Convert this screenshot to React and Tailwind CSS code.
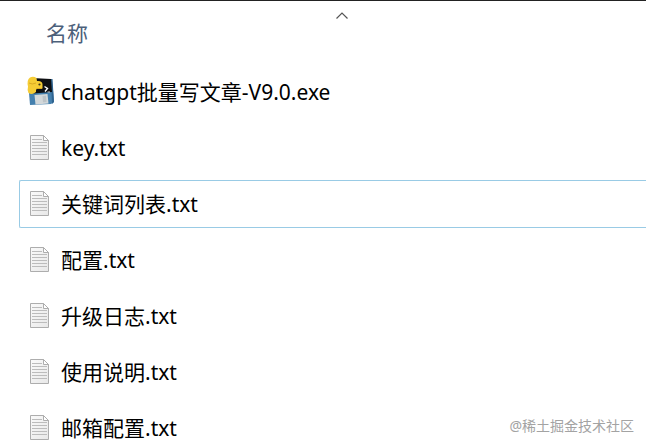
import clsx from "clsx";

const files = [
  { name: "chatgpt批量写文章-V9.0.exe", type: "exe" },
  { name: "key.txt", type: "txt" },
  { name: "关键词列表.txt", type: "txt", selected: true },
  { name: "配置.txt", type: "txt" },
  { name: "升级日志.txt", type: "txt" },
  { name: "使用说明.txt", type: "txt" },
  { name: "邮箱配置.txt", type: "txt" },
];

// Sheet of paper with a folded corner and ruled lines
const TextIcon = () => (
  <svg viewBox="0 0 32 32" className="size-8 shrink-0" aria-hidden="true">
    <defs>
      <linearGradient id="paper" x1="0" y1="0" x2="1" y2="1">
        <stop offset="0" stopColor="#fafafa" />
        <stop offset="1" stopColor="#e8e8e8" />
      </linearGradient>
    </defs>
    <path d="M5.5 3.5H18.5L23.5 8.5V27.5H5.5Z" fill="url(#paper)" stroke="#adadad" />
    <path d="M18.5 3.5V8.5H23.5Z" fill="#fff" stroke="#adadad" strokeLinejoin="round" />
    <path
      d="M7 7.5H17M7 10.5H22M7 13.5H22M7 16.5H22M7 19.5H22M7 22.5H22"
      stroke="#bcbcbc"
      fill="none"
    />
  </svg>
);

// Floppy disk with a console screen and the python snake
const ExeIcon = () => (
  <svg viewBox="0 0 32 32" className="size-8 shrink-0" aria-hidden="true">
    <path d="M3 5L27 3L29 26L26 28L5 29Z" fill="#4580ae" />
    <path d="M26 3L27.5 3L29 26L27 28Z" fill="#2f638f" />
    <path d="M7 2L26 3L27 16L8 17.5Z" fill="#0e0f12" />
    <path d="M9.5 19L22.5 18L23.5 27.5L10.5 28.5Z" fill="#d3d8da" />
    <path d="M17.5 20L21 19.7L21.6 26L18 26.3Z" fill="#bcc3c7" />
    <path d="M19.5 10.5L22.5 12.5L20 15.5" fill="none" stroke="#fff" strokeWidth="1.4" />
    <path d="M22.5 16H25" fill="none" stroke="#c9cdd0" />
    <path
      d="M5 1.5Q8.5 0 11.5 2L12 5Q17.5 4.5 17.5 8.5V12.5H12L11 14V16Q7 19.5 3.5 17Q2 14 3 10.5Q1.5 4 5 1.5Z"
      fill="#f5cc35"
    />
    <path d="M4 7Q7 9 11 7M12 12.5H17" fill="none" stroke="#d9a922" />
    <circle cx="14.5" cy="8.5" r="1.1" fill="#413819" />
  </svg>
);

const FileRow = ({ file }) => (
  <li>
    <button
      type="button"
      aria-pressed={Boolean(file.selected)}
      className={clsx(
        "flex h-12 w-full items-center gap-1 rounded-l-xs border border-r-0 pl-[5px] text-left text-[21px] leading-7 text-black",
        file.selected ? "border-[#99cbe5]" : "border-transparent"
      )}
    >
      {file.type === "exe" ? <ExeIcon /> : <TextIcon />}
      <span className="whitespace-nowrap">{file.name}</span>
    </button>
  </li>
);

const App = () => {
  return (
    <main className="relative h-screen overflow-hidden border-t border-[#222] bg-white font-['Noto_Sans','Noto_Sans_CJK_SC',sans-serif]">
      {/* Column header with the sort arrow */}
      <header className="pl-[38px]">
        <button type="button" className="flex h-[67px] w-full flex-col pt-[11px] pr-2 pl-2 text-left">
          <svg viewBox="0 0 12 7" className="h-[7px] w-3 self-center" aria-hidden="true">
            <path d="M0.5 6.5L6 1L11.5 6.5" fill="none" stroke="#555" strokeWidth="1.2" />
          </svg>
          <span className="text-[21px] leading-7 text-[#4c607a]">名称</span>
        </button>
      </header>

      <ul className="flex flex-col gap-2 pl-[19px]">
        {files.map((file) => (
          <FileRow key={file.name} file={file} />
        ))}
      </ul>

      {/* Watermark */}
      <p className="absolute right-3 bottom-3 text-[14px] leading-5 text-[#a3a3a3]">
        @稀土掘金技术社区
      </p>
    </main>
  );
};

export default App;
